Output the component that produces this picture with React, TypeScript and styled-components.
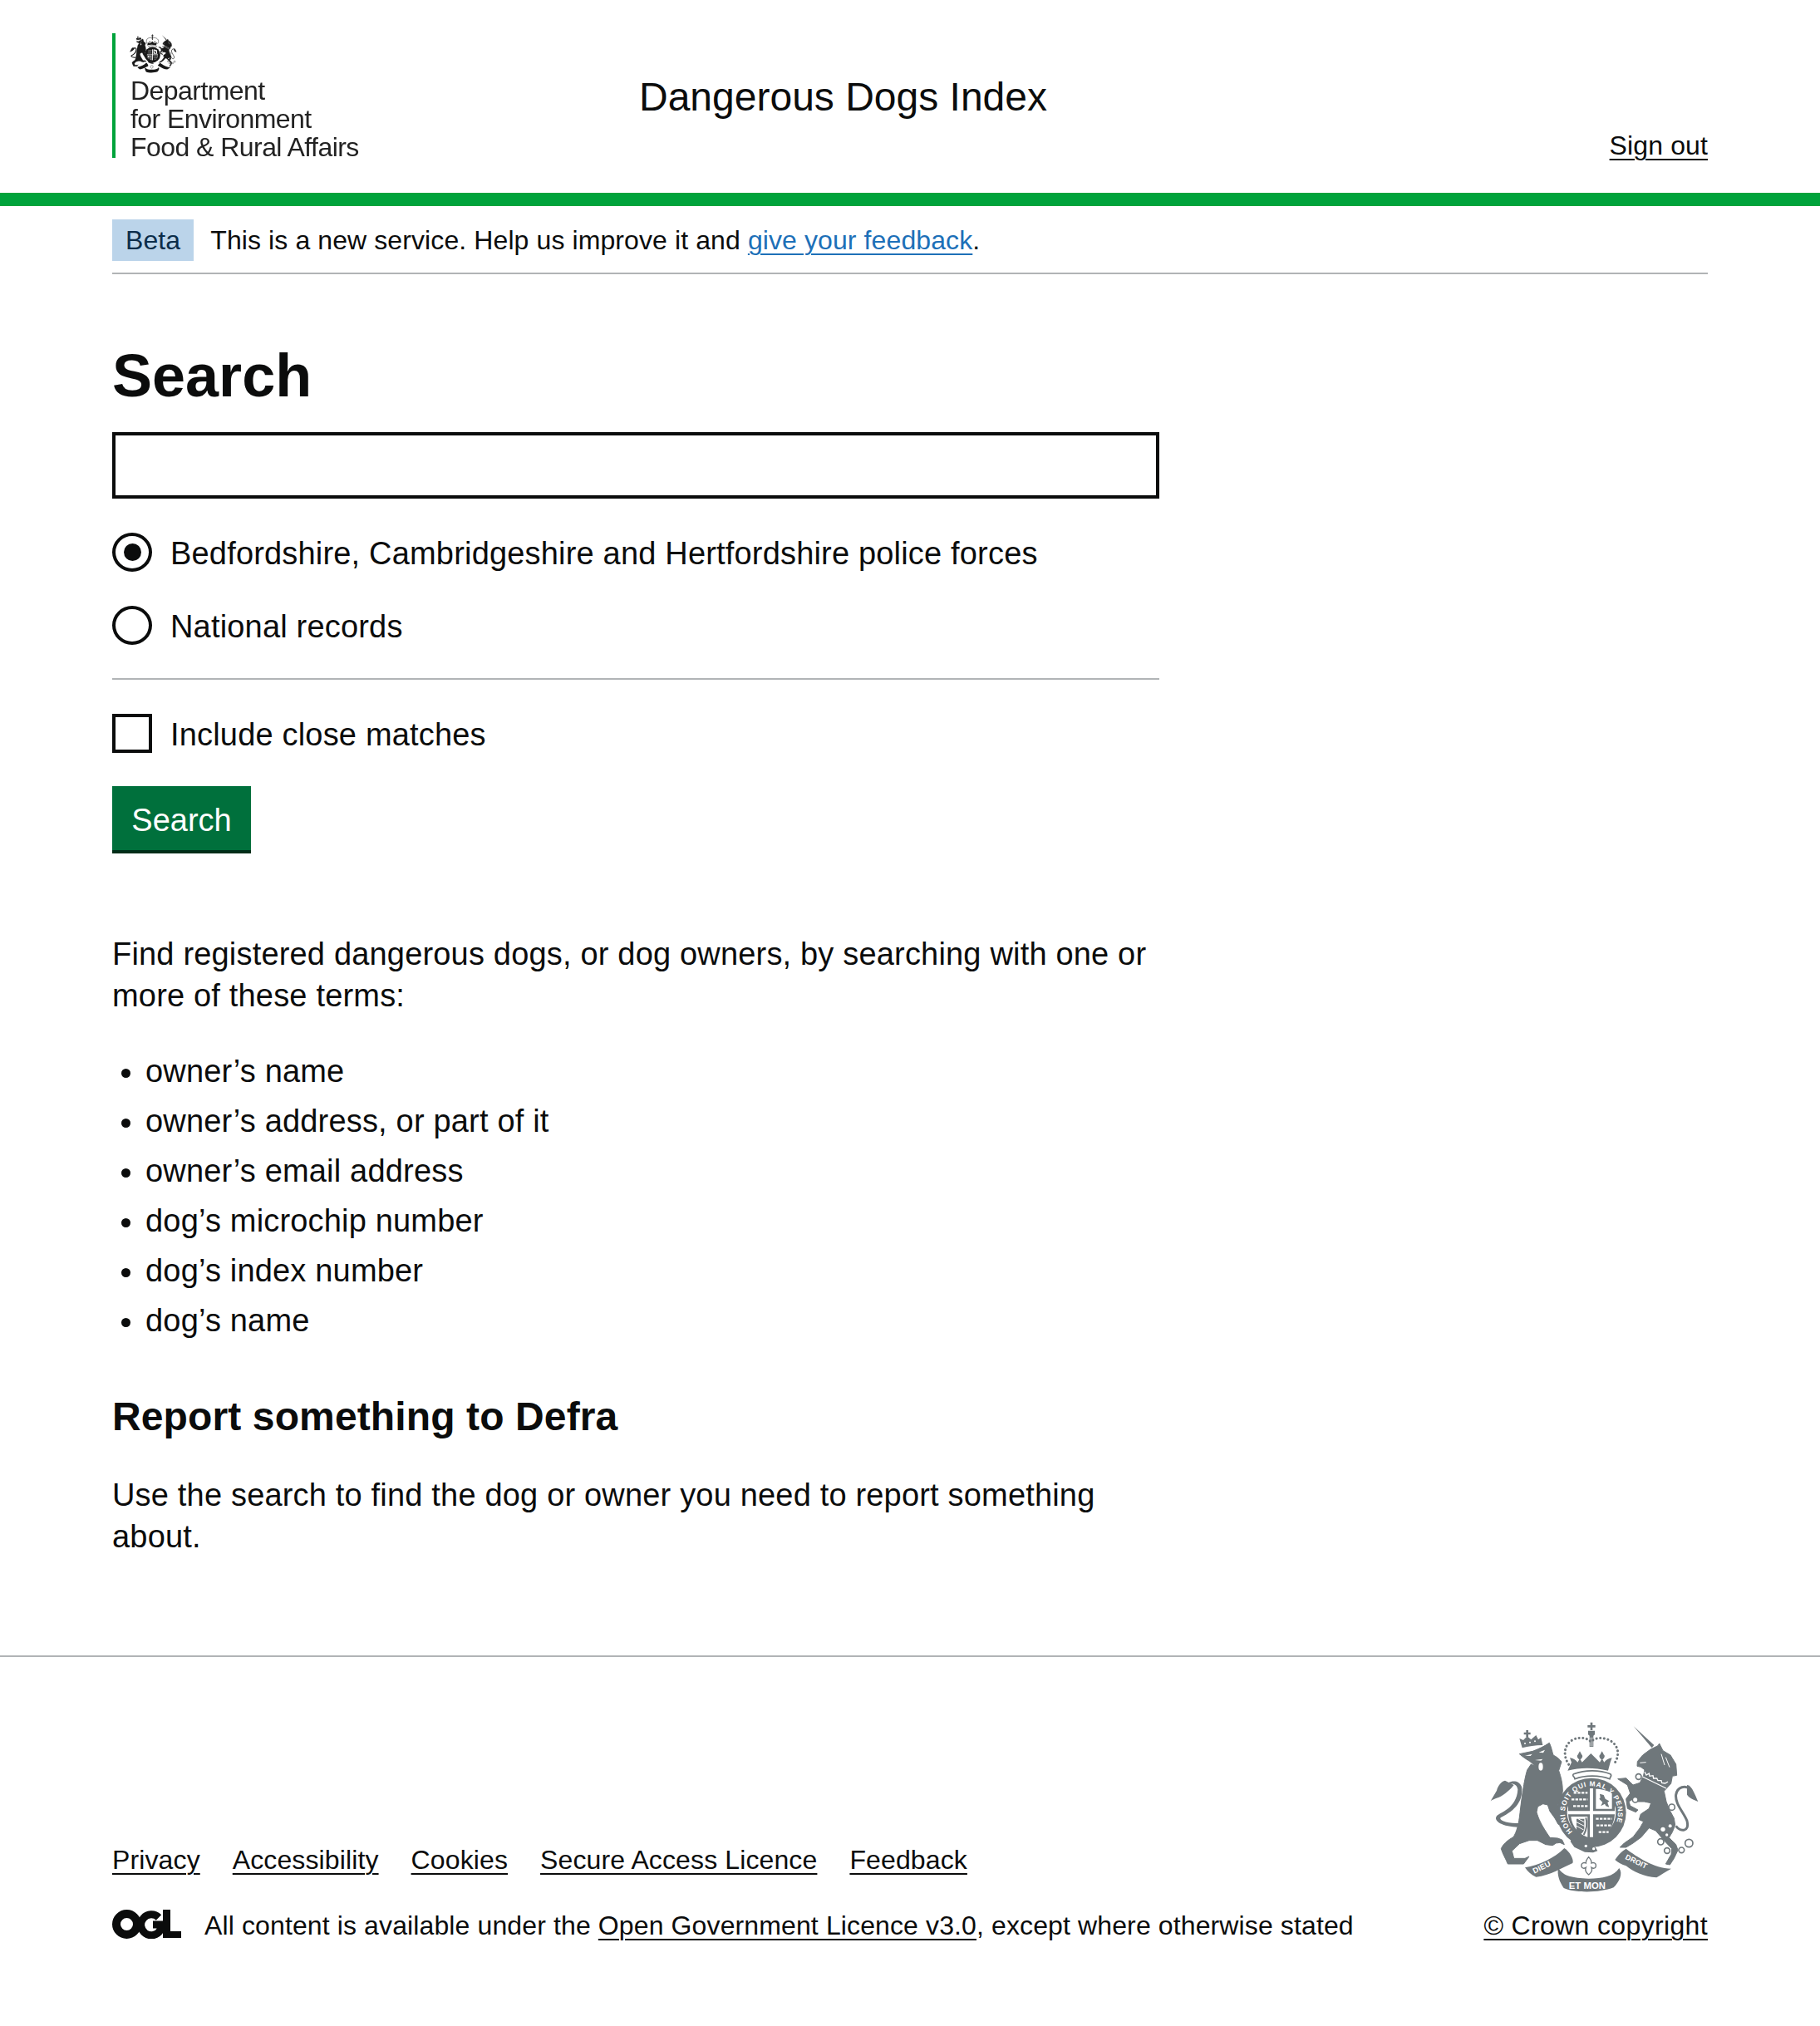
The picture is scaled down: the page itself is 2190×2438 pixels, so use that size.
import styled, { createGlobalStyle } from 'styled-components'

const GlobalStyle = createGlobalStyle`
  * { box-sizing: border-box; }
  body {
    margin: 0;
    background: #fff;
    color: #0b0c0c;
    font-family: "Liberation Sans", Arial, sans-serif;
  }
`

/* --------------------- Header --------------------- */
const Header = styled.header`
  display: grid;
  grid-template-columns: 634px 1fr auto;
  height: 248px;
  padding: 40px 135px 0;
  border-bottom: 16px solid #00a33b;
`
const Logo = styled.div`
  height: 150px;
  padding-left: 18px;
  border-left: 4px solid #00a33b;
`
const LogoCrest = styled.svg`
  display: block;
  width: 60px;
  height: 48px;
  margin-left: -3px;
  margin-bottom: 4px;
  filter: blur(0.5px);
`
const LogoText = styled.div`
  font-size: 32px;
  line-height: 34px;
  letter-spacing: -0.55px;
  color: #222;
  filter: blur(0.4px);
`
const ServiceName = styled.div`
  padding-top: 49px;
  font-size: 48px;
  line-height: 56px;
`
const SignOut = styled.a`
  align-self: end;
  margin-bottom: 37px;
  font-size: 32px;
  line-height: 40px;
  letter-spacing: 0.12px;
  color: #0b0c0c;
  text-decoration: underline;
  text-decoration-thickness: 2px;
  text-underline-offset: 5px;
`

/* --------------------- Beta --------------------- */
const Beta = styled.div`
  display: flex;
  align-items: center;
  gap: 20px;
  margin: 16px 135px 0;
  padding-bottom: 14px;
  border-bottom: 2px solid #b1b4b6;
  font-size: 32px;
  line-height: 40px;
  letter-spacing: 0.1px;
`
const BetaTag = styled.strong`
  padding: 5px 16px;
  background: #bbd4ea;
  color: #0c2d4a;
  font-weight: 400;
`
const BlueLink = styled.a`
  color: #1d70b8;
  text-decoration: underline;
  text-decoration-thickness: 2px;
  text-underline-offset: 5px;
`

/* --------------------- Main --------------------- */
const Main = styled.main`
  width: 1260px;
  margin: 0 135px;
  padding-top: 82px;
`
const Title = styled.h1`
  margin: 0 0 28px;
  font-size: 72px;
  line-height: 80px;
  font-weight: 700;
`
const SearchInput = styled.input`
  display: block;
  width: 100%;
  height: 80px;
  border: 4px solid #0b0c0c;
  border-radius: 0;
  background: #fff;
  outline: none;
`
const RadioGroup = styled.div`
  display: flex;
  flex-direction: column;
  gap: 41px;
  margin-top: 41px;
  padding-bottom: 40px;
  border-bottom: 2px solid #b1b4b6;
`
const Choice = styled.label`
  display: flex;
  align-items: flex-start;
  gap: 22px;
  height: 47px;
  font-size: 38px;
  line-height: 50px;
  letter-spacing: 0.18px;
`
const RadioMark = styled.span<{ $on?: boolean }>`
  flex: none;
  position: relative;
  width: 48px;
  height: 47px;
  border: 4px solid #0b0c0c;
  border-radius: 50%;
  &::after {
    content: '';
    display: ${(p) => (p.$on ? 'block' : 'none')};
    position: absolute;
    top: 9px;
    left: 10px;
    width: 21px;
    height: 21px;
    border-radius: 50%;
    background: #0b0c0c;
  }
`
const CheckMark = styled.span`
  flex: none;
  width: 48px;
  height: 47px;
  border: 4px solid #0b0c0c;
`
const CheckRow = styled.div`
  margin-top: 41px;
`
const SearchButton = styled.button`
  display: block;
  width: 167px;
  height: 81px;
  margin: 40px 0 0;
  padding: 0;
  border: 0;
  border-radius: 0;
  background: #00703c;
  box-shadow: inset 0 -4px 0 #002d18;
  color: #fff;
  font: 400 38px/50px "Liberation Sans", Arial, sans-serif;
`
const Para = styled.p<{ $top?: number }>`
  margin: ${(p) => p.$top ?? 0}px 0 0;
  font-size: 38px;
  line-height: 50px;
  letter-spacing: 0.18px;
`
const Terms = styled.ul`
  margin: 41px 0 0;
  padding: 0 0 0 40px;
  font-size: 38px;
  line-height: 50px;
  letter-spacing: 0.18px;
  li {
    margin-bottom: 10px;
  }
`
const SubTitle = styled.h2`
  margin: 63px 0 0;
  font-size: 48px;
  line-height: 56px;
  font-weight: 700;
  letter-spacing: 0.12px;
`

/* --------------------- Footer --------------------- */
const Footer = styled.footer`
  display: flex;
  justify-content: space-between;
  align-items: flex-end;
  height: 445px;
  margin-top: 118px;
  padding: 0 135px 100px;
  border-top: 2px solid #b1b4b6;
  font-size: 32px;
  line-height: 40px;
  letter-spacing: 0.12px;
`
const FooterLeft = styled.div`
  display: flex;
  flex-direction: column;
  gap: 39px;
`
const FooterLinks = styled.nav`
  display: flex;
  gap: 39px;
`
const FooterLink = styled.a`
  color: #0b0c0c;
  text-decoration: underline;
  text-decoration-thickness: 2px;
  text-underline-offset: 5px;
`
const CopyrightLink = styled(FooterLink)`
  letter-spacing: 0.35px;
`
const Licence = styled.div`
  display: flex;
  align-items: center;
  gap: 28px;
`
const OglMark = styled.svg`
  display: block;
  width: 83px;
  height: 35px;
  margin-top: -3px;
`
const CrownBlock = styled.div`
  display: flex;
  flex-direction: column;
  align-items: flex-end;
  gap: 19px;
`
const CrestBig = styled.svg`
  display: block;
  width: 265px;
  height: 210px;
  margin-right: 5px;
`
const CrestLabel = styled.text`
  fill: #fff;
  font-family: "Liberation Sans", Arial, sans-serif;
  font-weight: 700;
`

/* royal arms, drawn on a 795x630 grid */
const Crest = ({ fill, labels }: { fill: string; labels?: boolean }) => (
  <g fill={fill}>
    {/* big crown */}
    <path d="M386 14h8v10h10v8h-10v10h-8v-10h-10v-8h10z" />
    <path d="M378 44h24v14l-5 4v40h-14v-40l-5-4z" />
    <path fill="#fff" d="M386 68h2v32h-2zM392 68h2v32h-2z" />
    <path d="M318 158l-6-16c14 2 22 8 28 16l6-10c-8-6-10-14-4-18 2-6 4-8 6-12 2 4 4 6 6 12 6 4 4 12-4 18l6 10 14-14 18-18 18 18 14 14 6-10c-8-6-10-14-4-18 2-6 4-8 6-12 2 4 4 6 6 12 6 4 4 12-4 18l6 10c6-8 14-14 28-16l-6 16-8 30c-50-12-102-12-146 0z" />
    <path d="M326 200c40-14 90-16 132 0 4 4 4 8 0 12l-2 6c-36-14-90-14-126 0l-2-6c-6-4-6-10-2-12z" fill="none" stroke={fill} strokeWidth="5" />
    <g fill="none" stroke={fill} strokeWidth="9" strokeLinecap="round" strokeDasharray="0.5 13.5">
      <path d="M308 166c-24-36-16-76 20-92 26-8 46-4 60 10 14-14 36-18 62-8 38 16 46 56 20 90" />
    </g>

    {/* lion crown */}
    <path d="M154 42h8v8h8v8h-8v8h-8v-8h-8v-8h8z" />
    <path d="M140 106l-10-34 14 6 14-14 14 12 18-16 8 16 10-8 6 28c-26 0-52 4-74 10z" />
    <g fill="#fff">
      <circle cx="150" cy="90" r="3" />
      <circle cx="168" cy="86" r="3" />
      <circle cx="186" cy="82" r="3" />
    </g>
    {/* lion */}
    <path
      stroke={fill}
      strokeWidth="3"
      strokeLinejoin="round"
      d="M130 128L178 118C200 110 220 100 238 88C246 105 248 120 252 132C265 138 276 148 282 156L272 188C280 210 286 235 286 262L280 296L268 312C280 325 296 345 304 368L292 385L270 382L258 360L240 335L232 312L215 308L196 318L192 338C198 360 210 385 228 412L240 430L268 432L284 438L292 455L276 448L262 450L250 458L225 455L195 440L165 440L130 452L103 478L110 505L150 505L165 498L145 525L88 525C80 505 70 490 64 470C70 455 85 440 108 428C120 410 128 380 132 340C138 290 146 225 158 186L172 165L186 172C180 165 170 155 160 150L145 140Z"
    />
    <ellipse cx="207" cy="174" rx="8" ry="14" fill="#fff" />
    <path fill="#fff" d="M150 134l26-6-6 7zM200 122l22-9-6 11zM186 150l28-4-6 6z" />
    <path d="M126 392c-56 0-92-22-78-40 10-12 72-26 76-96-4-24-28-26-46-10l-4-2c16-20 52-28 64 2 6 50-20 84-76 112-8 8 20 22 66 20z" />
    <path d="M78 224c-12 2-26 18-30 36l-22 38c14-10 34-12 48-24 14-10 30-26 36-34z" />

    {/* unicorn */}
    <g transform="translate(390 0)">
      <path d="M152 28l74 68-8 10z" />
      <path
        stroke={fill}
        strokeWidth="3"
        strokeLinejoin="round"
        d="M166 155L185 132 212 112 240 98 245 90 258 116 285 132 305 165 308 205 292 208 287 235 262 262 270 300 282 330 298 360 302 385 292 410 280 430 305 455 312 475 298 505 283 528 268 525 288 490 290 470 262 440 232 405 208 395 180 428 150 450 125 465 103 465 118 450 150 428 175 395 188 372 172 365 178 345 208 325 215 305 190 300 165 300 150 290 135 300 140 315 168 330 160 338 130 325 125 290 140 270 130 240 95 218 125 215 150 240 175 232 188 205 192 185 178 175 165 172Z"
      />
      <path fill="none" stroke="#fff" strokeWidth="4" d="M192 192l6 12 10-6 2 10 12-2 2 10 12 0 4 8 12 0 2 8 12 2 10-6M184 210l86 42" />
      <path fill="none" stroke="#fff" strokeWidth="3" d="M175 160l22-2M268 140l14 36M252 128l12 40" />
      <g fill="#fff">
        <circle cx="258" cy="400" r="8" />
        <circle cx="284" cy="388" r="6" />
        <circle cx="272" cy="420" r="5" />
      </g>
      <g fill="#fff" stroke={fill} strokeWidth="5">
        <circle cx="170" cy="210" r="10" />
        <circle cx="158" cy="293" r="10" />
        <circle cx="290" cy="320" r="11" />
        <circle cx="250" cy="445" r="11" />
        <circle cx="273" cy="477" r="10" />
        <circle cx="325" cy="475" r="10" />
        <circle cx="352" cy="450" r="14" />
      </g>
      <path fill="none" stroke={fill} strokeWidth="9" d="M305 388c16 22 50 22 40-18-10-30-44-60-40-95 5-30 35-35 50-20" />
      <path d="M345 240c15 0 25 25 40 60-15-5-30-10-40-25z" />
    </g>

    {/* garter and shield */}
    <circle cx="390" cy="340" r="125" />
    <circle cx="390" cy="340" r="88" fill="#fff" />
    <path d="M312 262c22-14 48-18 72-18v90h-78v-44z" />
    <path d="M468 262c-22-14-48-18-72-18v90h78v-44z" />
    <path d="M306 346h78v92c-40-8-74-38-78-92z" />
    <path d="M474 346h-78v92c40-8 74-38 78-92z" />
    <g fill="none" stroke="#fff" strokeWidth="7" strokeDasharray="10 4">
      <path d="M326 268h50M318 292h58M324 316h52" />
      <path d="M406 362h58M408 386h52M416 410h36" />
    </g>
    <path fill="#fff" d="M406 254c18 0 40 4 58 16v56h-58z" />
    <path d="M420 272l14 4 6 14 14 8-6 6 6 16-12-4-4-8-14 8 6-14-12-12 4-4z" />
    <path fill="#fff" d="M316 354h60v74c-30-10-56-36-60-74z" />
    <path d="M336 362h28v36c0 10-10 16-14 22-6-6-14-12-14-22z" />
    <path fill="none" stroke="#fff" strokeWidth="3" d="M336 374l28 14M336 388l26 14M342 362l22 12" />
    <path fill="none" stroke={fill} strokeWidth="6" d="M370 358c6 20 2 46-8 62" />
    <path d="M318 436l86 28 8 14-16 6-30-2-38-18-14-20z" />
    <circle cx="370" cy="460" r="5" fill="#fff" />
    <circle cx="398" cy="470" r="5" fill="#fff" />

    {/* motto ribbon */}
    <path d="M150 538C200 530 255 505 292 468C310 478 328 510 322 522C290 535 240 568 190 572C172 565 160 552 150 538Z" />
    <path d="M270 540c20 30 50 35 110 38 50 0 90-8 110-38 15 20 0 50-20 70-50 20-140 20-180 2-15-22-25-47-20-72z" />
    <path d="M475 510C485 495 500 478 515 470C555 500 615 540 678 542C658 552 640 565 625 574C580 572 540 552 515 532C500 527 485 520 475 510Z" />
    <path fill="#fff" stroke={fill} strokeWidth="4" d="M380 500c6 8 12 12 10 22 8-4 18 0 16 12-2 8-10 8-16 4 4 10-2 20-10 26-8-6-14-16-10-26-6 4-14 4-16-4-2-12 8-16 16-12-2-10 4-14 10-22z" />

    {labels && (
      <>
        <defs>
          <path id="garter-arc" d="M322 408A96 96 0 1 1 458 408" />
        </defs>
        <CrestLabel fontSize="25">
          <textPath href="#garter-arc" textLength="410" lengthAdjust="spacing">
            HONI SOIT QUI MAL Y PENSE
          </textPath>
        </CrestLabel>
        <CrestLabel fontSize="28" transform="translate(184 560) rotate(-26)">
          DIEU
        </CrestLabel>
        <CrestLabel fontSize="34" x="308" y="614">
          ET MON
        </CrestLabel>
        <CrestLabel fontSize="27" transform="translate(510 506) rotate(26)">
          DROIT
        </CrestLabel>
      </>
    )}
  </g>
)

const App = () => (
  <>
    <GlobalStyle />
    <Header>
      <Logo>
        <LogoCrest viewBox="0 0 795 630" aria-hidden="true">
          <Crest fill="#1a1a1a" />
        </LogoCrest>
        <LogoText>
          Department
          <br />
          for Environment
          <br />
          Food &amp; Rural Affairs
        </LogoText>
      </Logo>
      <ServiceName>Dangerous Dogs Index</ServiceName>
      <SignOut href="#">Sign out</SignOut>
    </Header>

    <Beta>
      <BetaTag>Beta</BetaTag>
      <span>
        This is a new service. Help us improve it and <BlueLink href="#">give your feedback</BlueLink>.
      </span>
    </Beta>

    <Main>
      <Title>Search</Title>
      <SearchInput type="text" />
      <RadioGroup>
        <Choice>
          <RadioMark $on />
          Bedfordshire, Cambridgeshire and Hertfordshire police forces
        </Choice>
        <Choice>
          <RadioMark />
          National records
        </Choice>
      </RadioGroup>
      <CheckRow>
        <Choice>
          <CheckMark />
          Include close matches
        </Choice>
      </CheckRow>
      <SearchButton>Search</SearchButton>

      <Para $top={96}>
        Find registered dangerous dogs, or dog owners, by searching with one or more of these terms:
      </Para>
      <Terms>
        <li>owner’s name</li>
        <li>owner’s address, or part of it</li>
        <li>owner’s email address</li>
        <li>dog’s microchip number</li>
        <li>dog’s index number</li>
        <li>dog’s name</li>
      </Terms>
      <SubTitle>Report something to Defra</SubTitle>
      <Para $top={41}>Use the search to find the dog or owner you need to report something about.</Para>
    </Main>

    <Footer>
      <FooterLeft>
        <FooterLinks>
          <FooterLink href="#">Privacy</FooterLink>
          <FooterLink href="#">Accessibility</FooterLink>
          <FooterLink href="#">Cookies</FooterLink>
          <FooterLink href="#">Secure Access Licence</FooterLink>
          <FooterLink href="#">Feedback</FooterLink>
        </FooterLinks>
        <Licence>
          <OglMark viewBox="0 0 83 35" aria-hidden="true">
            <circle cx="17.5" cy="17.5" r="12.5" fill="none" stroke="#0b0c0c" strokeWidth="10" />
            <path d="M56 9.5a12.5 12.5 0 1 0 2 15V18h-9" fill="none" stroke="#0b0c0c" strokeWidth="9" />
            <path d="M61 0h9v26h13v8H61z" fill="#0b0c0c" />
          </OglMark>
          <span>
            All content is available under the <FooterLink href="#">Open Government Licence v3.0</FooterLink>, except
            where otherwise stated
          </span>
        </Licence>
      </FooterLeft>
      <CrownBlock>
        <CrestBig viewBox="0 0 795 630" aria-hidden="true">
          <Crest fill="#6f777b" labels />
        </CrestBig>
        <CopyrightLink href="#">© Crown copyright</CopyrightLink>
      </CrownBlock>
    </Footer>
  </>
)

export default App
